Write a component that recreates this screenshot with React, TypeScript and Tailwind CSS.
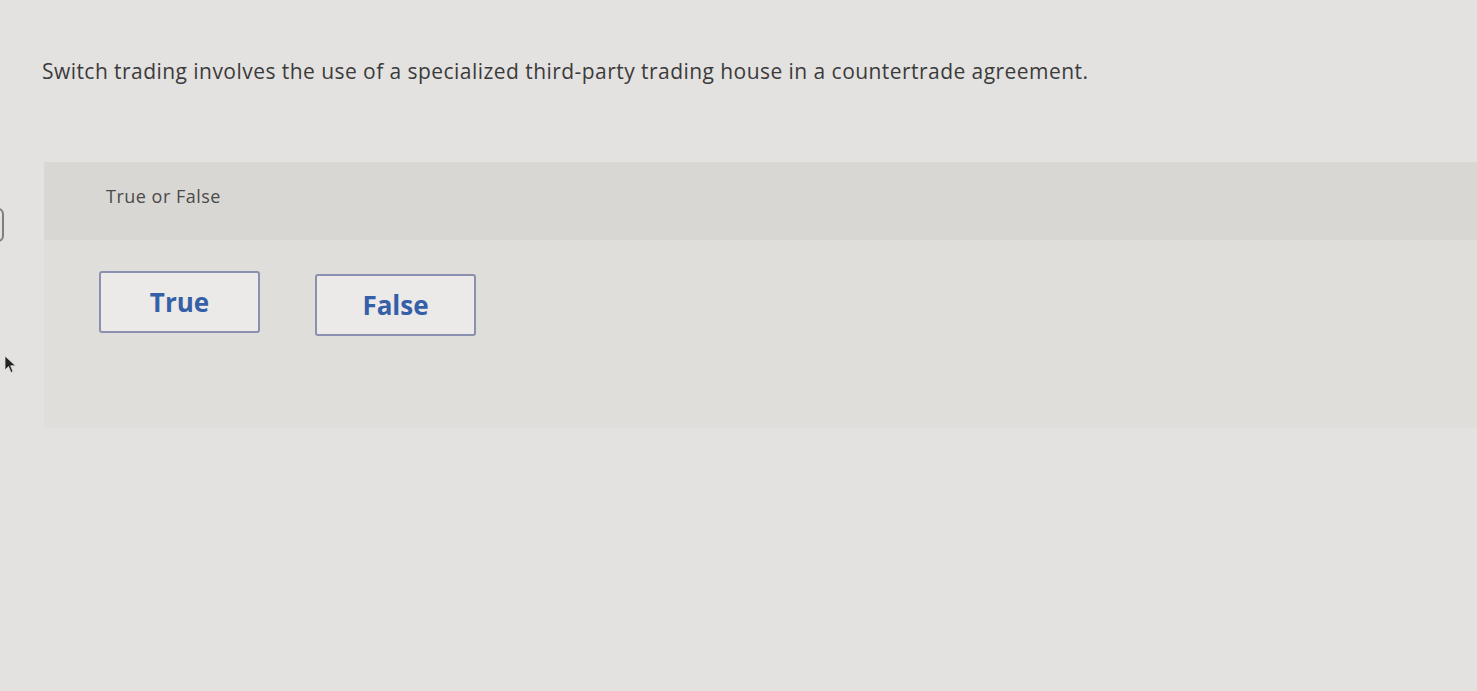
import React from "react";

const Cursor = () => (
  <svg width="14" height="20" viewBox="0 0 14 20" className="absolute left-[4px] top-[355px]">
    <path d="M1 1 L1 15 L4.5 11.5 L7 17.5 L9 16.5 L6.6 10.8 L11.5 10.8 Z" fill="#222" stroke="#ddd" strokeWidth="0.8" />
  </svg>
);

const ChoiceButton = ({ label, offset }: { label: string; offset: string }) => (
  <button
    className={`w-[161px] h-[62px] ${offset} rounded-[3px] border-2 border-[#8a90ad] bg-[#ebeae8] text-[26px] font-bold text-[#3560a8]`}
  >
    {label}
  </button>
);

export default function App() {
  return (
    <div
      className="relative min-h-[691px] w-full overflow-hidden bg-[#e3e2e0]"
      style={{ fontFamily: "'Open Sans', Lato, sans-serif" }}
    >
      <div className="absolute left-[-8px] top-[208px] h-[34px] w-[12px] rounded-r-md border-2 border-[#7f7f7f]" />
      <Cursor />

      <div className="pl-[42px] pt-[51px] pb-[71px]">
        <p className="text-[21px] leading-[40px] tracking-[0.45px] text-[#3b3b3b]">
          Switch trading involves the use of a specialized third-party trading house in a countertrade agreement.
        </p>
      </div>

      <div className="ml-[44px] bg-[#dfdedb]">
        <div className="h-[78px] bg-[#d8d7d4] pl-[62px] pt-[21px]">
          <span className="text-[18px] tracking-[0.5px] text-[#4a4a4a]">True or False</span>
        </div>
        <div className="flex gap-[55px] pl-[55px] pt-[31px] pb-[92px]">
          <ChoiceButton label="True" offset="mt-0" />
          <ChoiceButton label="False" offset="mt-[3px]" />
        </div>
      </div>
    </div>
  );
}
